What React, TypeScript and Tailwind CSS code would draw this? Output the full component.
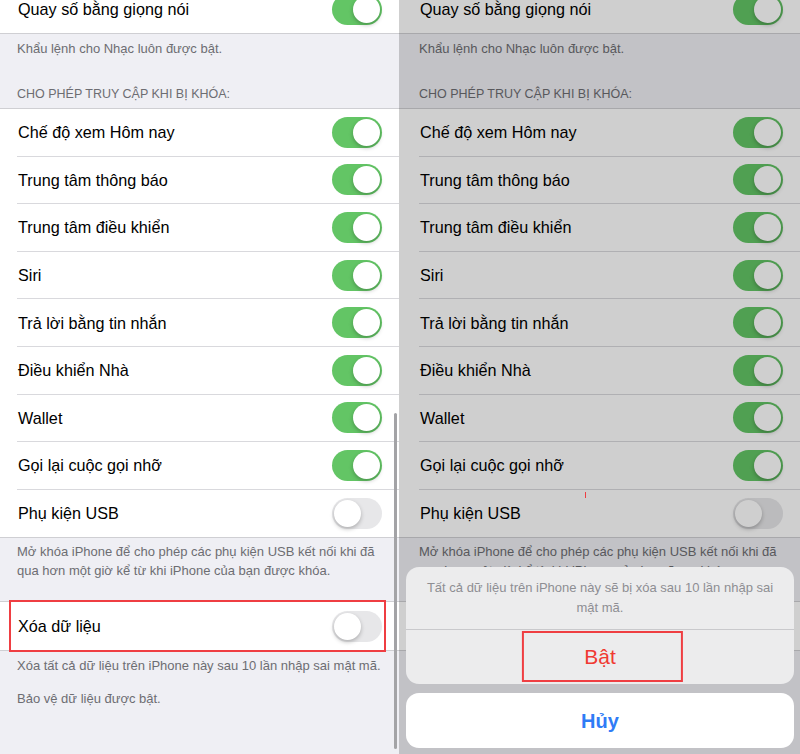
import React from "react";

const font = { fontFamily: '"Liberation Sans", Arial, sans-serif' };

const lockRows = [
  "Chế độ xem Hôm nay",
  "Trung tâm thông báo",
  "Trung tâm điều khiển",
  "Siri",
  "Trả lời bằng tin nhắn",
  "Điều khiển Nhà",
  "Wallet",
  "Gọi lại cuộc gọi nhỡ",
];

const Toggle = ({ on }: { on: boolean }) => (
  <div
    className={`relative h-[31px] w-[50px] shrink-0 rounded-full ${
      on ? "bg-[#63c565]" : "bg-[#e7e7e9]"
    }`}
  >
    <div
      className={`absolute top-[2px] h-[27px] w-[27px] rounded-full bg-white shadow-[0_2px_4px_rgba(0,0,0,0.25)] ${
        on ? "right-[2px]" : "left-[2px]"
      }`}
    />
  </div>
);

const Row = ({
  label,
  on,
  last,
  right,
  children,
}: {
  label: string;
  on: boolean;
  last?: boolean;
  right?: boolean;
  children?: React.ReactNode;
}) => (
  <div className={`relative flex h-[47.6px] bg-white ${right ? "pl-[20px]" : "pl-[17px]"}`}>
    <div
      className={`flex flex-1 items-center justify-between pr-[17px] ${
        last ? "" : "border-b border-[#d9d9dd]"
      }`}
    >
      <span className="pl-px text-[16.2px] text-black">{label}</span>
      <Toggle on={on} />
    </div>
    {children}
  </div>
);

const Screen = ({ right }: { right?: boolean }) => {
  const pad = right ? "pl-[20px] pr-[17px]" : "px-[17px]";
  return (
    <div className="relative h-full overflow-hidden bg-[#efeff4]">
      <div className="-mt-[14.6px] border-b border-[#cfcfd3]">
        <Row label="Quay số bằng giọng nói" on last right={right} />
      </div>

      <div className={`${pad} text-[13px] text-[#6d6d72]`}>
        <p className="pt-[6px] leading-[18px]">Khẩu lệnh cho Nhạc luôn được bật.</p>
        <p className="mt-[27px] pb-[5px] text-[12.5px] leading-[18px]">
          CHO PHÉP TRUY CẬP KHI BỊ KHÓA:
        </p>
      </div>

      <div className="border-y border-[#cfcfd3]">
        {lockRows.map((label) => (
          <Row key={label} label={label} on right={right} />
        ))}
        <Row label="Phụ kiện USB" on={false} last right={right} />
      </div>

      <p className={`${pad} pt-[5px] text-[13px] leading-[18.5px] text-[#6d6d72]`}>
        Mở khóa iPhone để cho phép các phụ kiện USB kết nối khi đã qua hơn một giờ kể từ khi
        iPhone của bạn được khóa.
      </p>

      <div className="mt-[21px] border-y border-[#cfcfd3]">
        <Row label="Xóa dữ liệu" on={false} last right={right}>
          {!right && (
            <div className="absolute -top-[2px] -bottom-[2px] left-[9px] right-[13px] border-2 border-[#ef3e42]" />
          )}
        </Row>
      </div>

      <div className={`${pad} text-[13px] leading-[18px] text-[#6d6d72]`}>
        <p className="pt-[6px]">Xóa tất cả dữ liệu trên iPhone này sau 10 lần nhập sai mật mã.</p>
        <p className="mt-[15.4px]">Bảo vệ dữ liệu được bật.</p>
      </div>

      {!right && (
        <div className="absolute right-[2px] top-[413px] bottom-[5px] w-[3px] rounded-full bg-[#a3a3a6]" />
      )}

      {right && (
        <>
          <div className="absolute inset-0 bg-black/[0.19]" />
          <div className="absolute left-[186px] top-[492px] h-[6px] w-px bg-[#ef3e42]" />
          <div className="absolute bottom-[6px] left-[7px] right-[6px] flex flex-col gap-[9px]">
            <div className="overflow-hidden rounded-[13px] bg-[#ececed]">
              <p className="flex h-[63px] items-center justify-center border-b border-[#c9c9cc] px-[20px] text-center text-[13px] leading-[20px] text-[#8e8e93]">
                Tất cả dữ liệu trên iPhone này sẽ bị xóa sau 10 lần nhập sai
                <br />
                mật mã.
              </p>
              <div className="relative flex h-[54px] items-center justify-center text-[21px] text-[#f03a32]">
                Bật
                <div className="absolute left-1/2 top-px h-[51px] w-[161px] -translate-x-[48.5%] border-2 border-[#ef3e42]" />
              </div>
            </div>
            <div className="flex h-[55px] items-center justify-center rounded-[13px] bg-white text-[20px] font-semibold text-[#2f7cf6]">
              Hủy
            </div>
          </div>
        </>
      )}
    </div>
  );
}

export default function App() {
  return (
    <div className="flex h-[754px] w-[800px] overflow-hidden bg-[#9a9a9e]" style={font}>
      <div className="w-[399px] shrink-0">
        <Screen />
      </div>
      <div className="flex-1">
        <Screen right />
      </div>
    </div>
  );
}
